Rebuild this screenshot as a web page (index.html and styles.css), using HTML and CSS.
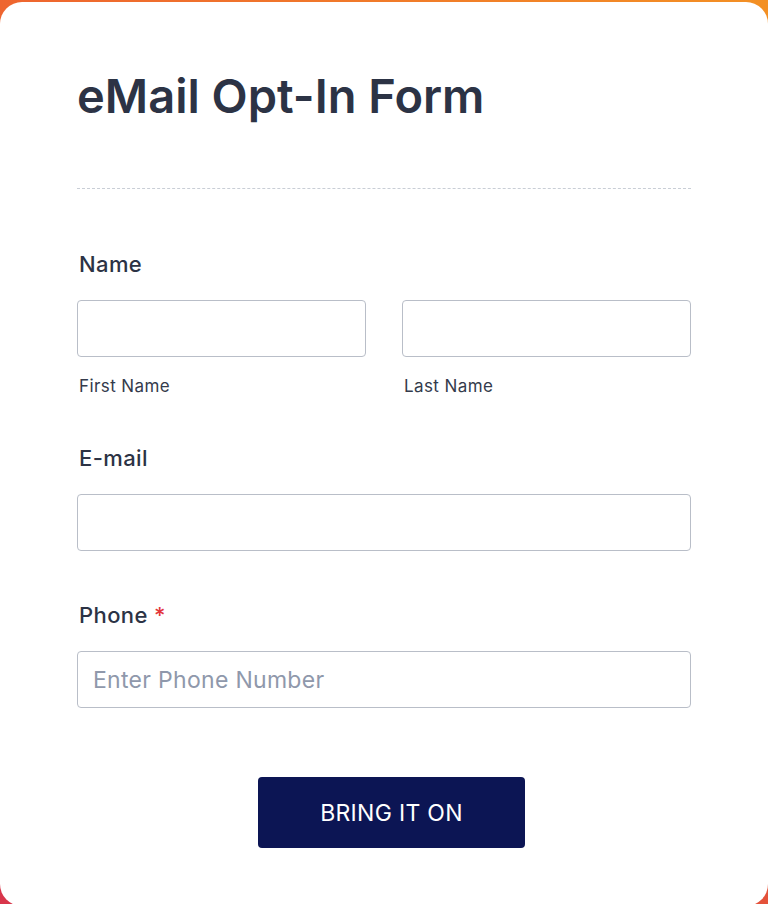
FILE: index.html
```html
<!DOCTYPE html>
<html lang="en">
<head>
    <meta charset="UTF-8">
    <meta name="viewport" content="width=device-width, initial-scale=1.0">
    <title>eMail Opt-In Form</title>
    <link rel="stylesheet" href="styles.css">
</head>
<body>
    <div class="card">
        <div class="form-header">
            <h1 class="form-title">eMail Opt-In Form</h1>
        </div>

        <div class="field">
            <label class="field-label">Name</label>
            <div class="name-row">
                <div class="sub-field">
                    <input class="text-input" type="text">
                    <span class="sub-label">First Name</span>
                </div>
                <div class="sub-field">
                    <input class="text-input" type="text">
                    <span class="sub-label">Last Name</span>
                </div>
            </div>
        </div>

        <div class="field">
            <label class="field-label">E-mail</label>
            <input class="text-input" type="email">
        </div>

        <div class="field">
            <label class="field-label">Phone <span class="required">*</span></label>
            <input class="text-input" type="tel" placeholder="Enter Phone Number">
        </div>

        <div class="button-row">
            <button class="submit-button">BRING IT ON</button>
        </div>
    </div>
</body>
</html>
```

FILE: styles.css
```css
body {
    margin: 0;
    height: 904px;
    overflow: hidden;
    font-family: 'Inter', 'Noto Sans', sans-serif;
    background: linear-gradient(to right, #ee652f, #f39024) top / 100% 40px no-repeat,
                linear-gradient(to right, #d8364b, #e4523a) bottom / 100% 40px no-repeat,
                #e8583a;
}
.card {
    margin-top: 2px;
    height: 904px;
    box-sizing: border-box;
    background-color: #ffffff;
    border-radius: 22px;
    padding: 67px 77px 0 77px;
    color: #2c3345;
}
.form-header {
    border-bottom: 1px dashed #c9ced6;
    padding-bottom: 65px;
    margin-bottom: 62px;
}
.form-title {
    margin: 0;
    font-size: 47px;
    line-height: 54px;
    font-weight: 600;
}
.field {
    display: flex;
    flex-direction: column;
    margin-bottom: 51px;
}
.field-label {
    display: block;
    font-size: 22px;
    line-height: 26px;
    font-weight: 500;
    letter-spacing: 0.4px;
    margin: 0 0 23px 2px;
}
.required {
    color: #e3363b;
}
.name-row {
    display: grid;
    grid-template-columns: 1fr 1fr;
    column-gap: 36px;
}
.sub-field {
    display: flex;
    flex-direction: column;
}
.sub-label {
    font-size: 17px;
    line-height: 16px;
    letter-spacing: 0.4px;
    margin: 21px 0 0 2px;
    color: #343b4c;
}
.text-input {
    box-sizing: border-box;
    width: 100%;
    height: 57px;
    margin: 0;
    border: 1px solid #b9bec8;
    border-radius: 4px;
    padding: 0 15px;
    font-family: 'Inter', 'Noto Sans', sans-serif;
    font-size: 23px;
    letter-spacing: 0.3px;
    color: #2c3345;
    background-color: #ffffff;
    outline: none;
}
.text-input::placeholder {
    color: #8f98ab;
}
.button-row {
    display: flex;
    padding-top: 18px;
}
.submit-button {
    margin-left: 181px;
    width: 267px;
    height: 71px;
    border: none;
    border-radius: 4px;
    background-color: #0c1554;
    color: #ffffff;
    font-family: 'Inter', 'Noto Sans', sans-serif;
    font-size: 23px;
    letter-spacing: 0.3px;
    cursor: pointer;
}
```
